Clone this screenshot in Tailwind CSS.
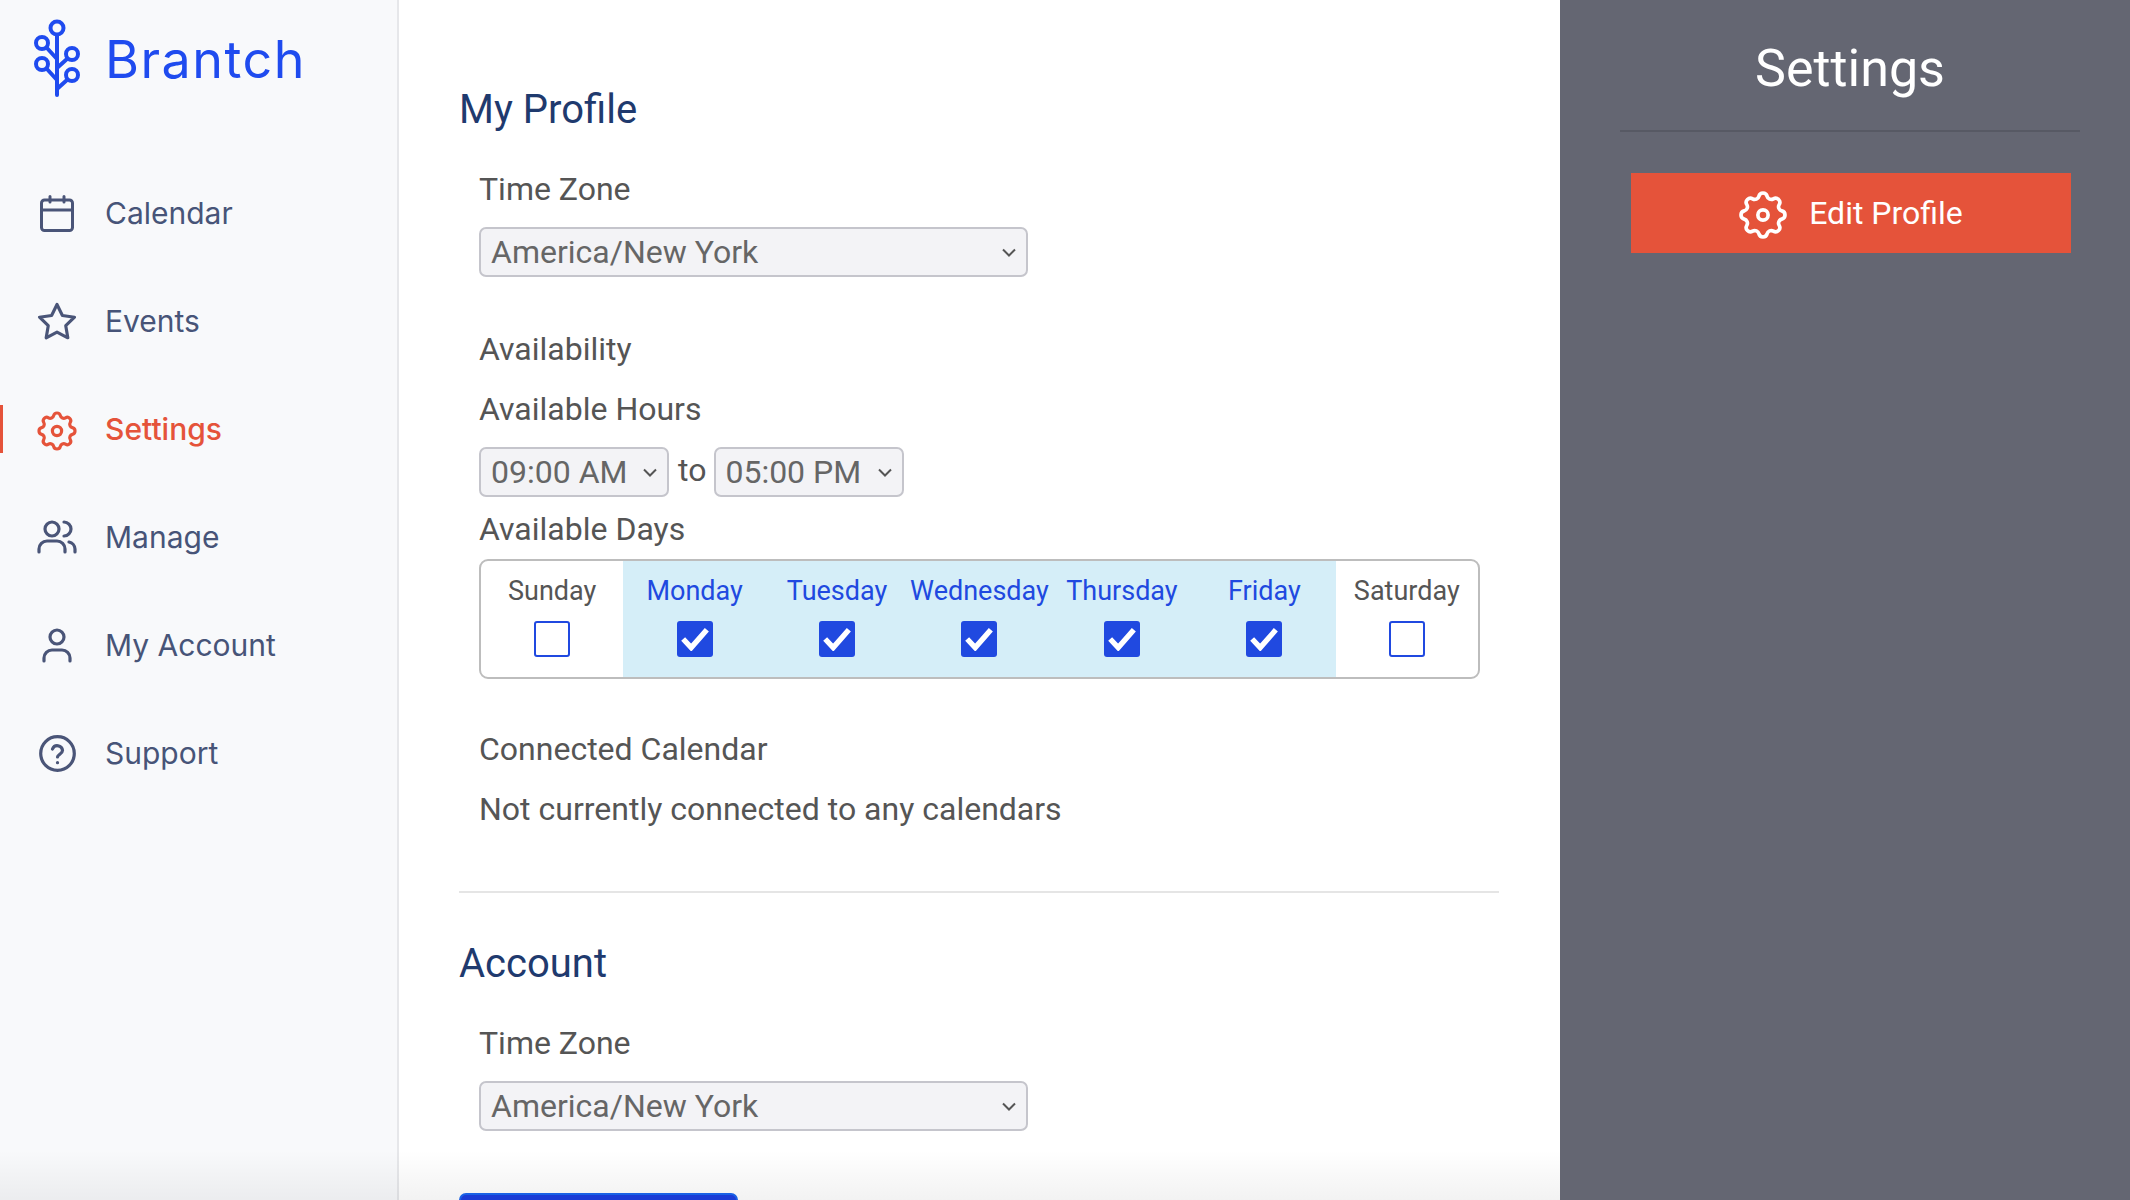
<!DOCTYPE html>
<html lang="en">
<head>
  <meta charset="UTF-8">
  <title>Brantch - Settings</title>
  <script src="https://cdn.jsdelivr.net/npm/@tailwindcss/browser@4"></script>
</head>
<body class="h-[1200px] overflow-hidden bg-white font-[Roboto,sans-serif]">
  <div class="relative flex h-[1200px] overflow-hidden">

    <!-- Sidebar -->
    <aside class="w-[399px] shrink-0 border-r-2 border-[#e6e7ea] bg-[#f8f9fb] font-[Inter,sans-serif]">
      <div class="flex h-[159px] items-start pl-[33px] pt-[19px]">
        <svg class="h-[78px] w-[48px] shrink-0" viewBox="33 19 48 78" fill="none" stroke="#1f4bef" stroke-width="4" stroke-linecap="round">
          <circle cx="57" cy="28" r="6.5"/>
          <circle cx="42" cy="43" r="6"/>
          <circle cx="72" cy="54" r="6"/>
          <circle cx="42" cy="64" r="6"/>
          <circle cx="72" cy="75" r="6"/>
          <path d="M57 35V95M46.500 47.500 57 59M46.500 68.500 57 80M67.500 58.500 57 68M67.500 79.500 57 89"/>
        </svg>
        <span class="ml-[24px] mt-[9px] text-[52px] leading-[64px] tracking-[1.500px] text-[#1f4bef]">Brantch</span>
      </div>
      <nav class="text-[30px] text-[#475478]">
        <a class="flex h-[108px] items-center">
          <span class="flex w-[114px] justify-center">
            <svg class="h-[37px] w-[34px]" viewBox="0 0 34 37" fill="none" stroke="#4a5578" stroke-width="3" stroke-linecap="round" stroke-linejoin="round"><rect x="1.500" y="5" width="31" height="30.500" rx="3"/><path d="M1.500 15H32.500M10 1.500V7M24 1.500V7"/></svg>
          </span>
          <span class="-ml-[9px]">Calendar</span>
        </a>
        <a class="flex h-[108px] items-center">
          <span class="flex w-[114px] justify-center pt-[2px]">
            <svg class="h-[42px] w-[42px]" viewBox="0 0 24 24" fill="none" stroke="#4a5578" stroke-width="1.800" stroke-linecap="round" stroke-linejoin="round"><path d="M12 2 15.090 8.260 22 9.270 17 14.140 18.180 21.020 12 17.770 5.820 21.020 7 14.140 2 9.270 8.910 8.260Z"/></svg>
          </span>
          <span class="-ml-[9px]">Events</span>
        </a>
        <a class="relative flex h-[108px] items-center font-medium text-[#e5533a]">
          <span class="absolute left-0 top-[30px] h-[48px] w-[3px] bg-[#e5533a]"></span>
          <span class="flex w-[114px] justify-center pt-[4px]">
            <svg class="h-[36px] w-[36px] overflow-visible" viewBox="3 3 18 18" fill="none" stroke="#e5533a" stroke-width="1.600" stroke-linecap="round" stroke-linejoin="round"><path d="M10.325 4.317c.426-1.756 2.924-1.756 3.35 0a1.724 1.724 0 002.573 1.066c1.543-.94 3.31.826 2.37 2.37a1.724 1.724 0 001.065 2.572c1.756.426 1.756 2.924 0 3.35a1.724 1.724 0 00-1.066 2.573c.94 1.543-.826 3.31-2.37 2.37a1.724 1.724 0 00-2.572 1.065c-.426 1.756-2.924 1.756-3.35 0a1.724 1.724 0 00-2.573-1.066c-1.543.94-3.31-.826-2.37-2.37a1.724 1.724 0 00-1.065-2.572c-1.756-.426-1.756-2.924 0-3.35a1.724 1.724 0 001.066-2.573c-.94-1.543.826-3.31 2.37-2.37.996.608 2.296.07 2.572-1.065z"/><circle cx="12" cy="12" r="2.300"/></svg>
          </span>
          <span class="-ml-[9px]">Settings</span>
        </a>
        <a class="flex h-[108px] items-center">
          <span class="flex w-[114px] justify-center">
            <svg class="h-[34px] w-[40px]" viewBox="0 0 40 34" fill="none" stroke="#4a5578" stroke-width="3.200" stroke-linecap="round" stroke-linejoin="round"><circle cx="15" cy="9" r="7"/><path d="M2 32v-3a8 8 0 0 1 8-8h10a8 8 0 0 1 8 8v3M27 2a7 7 0 0 1 0 14M32 22a7.500 7.500 0 0 1 6 7v3"/></svg>
          </span>
          <span class="-ml-[9px]">Manage</span>
        </a>
        <a class="flex h-[108px] items-center">
          <span class="flex w-[114px] justify-center">
            <svg class="h-[35px] w-[30px]" viewBox="0 0 30 35" fill="none" stroke="#4a5578" stroke-width="3.200" stroke-linecap="round" stroke-linejoin="round"><circle cx="15" cy="9" r="7"/><path d="M2 33v-3a8 8 0 0 1 8-8h10a8 8 0 0 1 8 8v3"/></svg>
          </span>
          <span class="-ml-[9px]">My Account</span>
        </a>
        <a class="flex h-[108px] items-center">
          <span class="flex w-[114px] justify-center">
            <svg class="h-[37px] w-[37px]" viewBox="0 0 37 37" fill="none" stroke="#4a5578" stroke-width="3.200" stroke-linecap="round" stroke-linejoin="round"><circle cx="18.500" cy="18.500" r="16.800"/><path d="M13.500 14a5.200 5.200 0 0 1 10 1.500c0 3.300-5 4.500-5 6.500M18.500 27.500v.2"/></svg>
          </span>
          <span class="-ml-[9px]">Support</span>
        </a>
      </nav>
    </aside>

    <!-- Main form -->
    <main class="w-[1161px] shrink-0 pl-[60px] pr-[61px] pt-[86px] text-[32px] leading-[40px] text-[#555555]">
      <h2 class="text-[40px] leading-[48px] text-[#1f3a6e]">My Profile</h2>
      <div class="pl-[20px]">
        <p class="mt-[35px]">Time Zone</p>
        <div class="relative mt-[18px] w-[549px]">
          <select class="block h-[50px] w-full appearance-none rounded-[7px] border-2 border-[#c5c5cc] bg-[#f3f3f6] pl-[10px] leading-[46px] text-[#666666]"><option>America/New York</option></select>
          <svg class="pointer-events-none absolute right-[12px] top-[21px] h-[9px] w-[14px]" viewBox="0 0 14 9" fill="none" stroke="#555555" stroke-width="2"><path d="M1 1.500 7 7.500 13 1.500"/></svg>
        </div>

        <p class="mt-[52px]">Availability</p>
        <p class="mt-[20px]">Available Hours</p>
        <div class="mt-[18px] flex items-start">
          <div class="relative w-[190px]">
            <select class="block h-[50px] w-full appearance-none rounded-[7px] border-2 border-[#c5c5cc] bg-[#f3f3f6] pl-[10px] leading-[46px] text-[#666666]"><option>09:00 AM</option></select>
            <svg class="pointer-events-none absolute right-[12px] top-[21px] h-[9px] w-[14px]" viewBox="0 0 14 9" fill="none" stroke="#555555" stroke-width="2"><path d="M1 1.500 7 7.500 13 1.500"/></svg>
          </div>
          <span class="ml-[9px] mr-[8px] leading-[46px]">to</span>
          <div class="relative w-[190px]">
            <select class="block h-[50px] w-full appearance-none rounded-[7px] border-2 border-[#c5c5cc] bg-[#f3f3f6] pl-[9px] leading-[46px] text-[#666666]"><option>05:00 PM</option></select>
            <svg class="pointer-events-none absolute right-[12px] top-[21px] h-[9px] w-[14px]" viewBox="0 0 14 9" fill="none" stroke="#555555" stroke-width="2"><path d="M1 1.500 7 7.500 13 1.500"/></svg>
          </div>
        </div>

        <p class="mt-[12px]">Available Days</p>
        <div class="mt-[10px] grid h-[120px] w-[1001px] grid-cols-7 overflow-hidden rounded-[9px] border-2 border-[#bdbdbd] text-center text-[27px] leading-[32px]">
          <div class="pt-[14px]">Sunday<span class="mx-auto mt-[14px] block h-[36px] w-[36px] rounded-[3px] border-2 border-[#2049e0] bg-white"></span></div>
          <div class="bg-[#d5eef8] pt-[14px] text-[#2049e0]">Monday<span class="mx-auto mt-[14px] flex h-[36px] w-[36px] items-center justify-center rounded-[3px] bg-[#2049e0]"><svg class="h-[24px] w-[28px]" viewBox="0 0 26 22" fill="none" stroke="#ffffff" stroke-width="5"><path d="M2 11 9.500 19 24 2.500"/></svg></span></div>
          <div class="bg-[#d5eef8] pt-[14px] text-[#2049e0]">Tuesday<span class="mx-auto mt-[14px] flex h-[36px] w-[36px] items-center justify-center rounded-[3px] bg-[#2049e0]"><svg class="h-[24px] w-[28px]" viewBox="0 0 26 22" fill="none" stroke="#ffffff" stroke-width="5"><path d="M2 11 9.500 19 24 2.500"/></svg></span></div>
          <div class="bg-[#d5eef8] pt-[14px] text-[#2049e0]">Wednesday<span class="mx-auto mt-[14px] flex h-[36px] w-[36px] items-center justify-center rounded-[3px] bg-[#2049e0]"><svg class="h-[24px] w-[28px]" viewBox="0 0 26 22" fill="none" stroke="#ffffff" stroke-width="5"><path d="M2 11 9.500 19 24 2.500"/></svg></span></div>
          <div class="bg-[#d5eef8] pt-[14px] text-[#2049e0]">Thursday<span class="mx-auto mt-[14px] flex h-[36px] w-[36px] items-center justify-center rounded-[3px] bg-[#2049e0]"><svg class="h-[24px] w-[28px]" viewBox="0 0 26 22" fill="none" stroke="#ffffff" stroke-width="5"><path d="M2 11 9.500 19 24 2.500"/></svg></span></div>
          <div class="bg-[#d5eef8] pt-[14px] text-[#2049e0]">Friday<span class="mx-auto mt-[14px] flex h-[36px] w-[36px] items-center justify-center rounded-[3px] bg-[#2049e0]"><svg class="h-[24px] w-[28px]" viewBox="0 0 26 22" fill="none" stroke="#ffffff" stroke-width="5"><path d="M2 11 9.500 19 24 2.500"/></svg></span></div>
          <div class="pt-[14px]">Saturday<span class="mx-auto mt-[14px] block h-[36px] w-[36px] rounded-[3px] border-2 border-[#2049e0] bg-white"></span></div>
        </div>

        <p class="mt-[50px]">Connected Calendar</p>
        <p class="mt-[20px]">Not currently connected to any calendars</p>
      </div>

      <hr class="mt-[62px] border-t-2 border-[#e5e5e5]">

      <h2 class="mt-[47px] text-[40px] leading-[48px] text-[#1f3a6e]">Account</h2>
      <div class="pl-[20px]">
        <p class="mt-[35px]">Time Zone</p>
        <div class="relative mt-[18px] w-[549px]">
          <select class="block h-[50px] w-full appearance-none rounded-[7px] border-2 border-[#c5c5cc] bg-[#f3f3f6] pl-[10px] leading-[46px] text-[#666666]"><option>America/New York</option></select>
          <svg class="pointer-events-none absolute right-[12px] top-[21px] h-[9px] w-[14px]" viewBox="0 0 14 9" fill="none" stroke="#555555" stroke-width="2"><path d="M1 1.500 7 7.500 13 1.500"/></svg>
        </div>
      </div>
      <button class="mt-[62px] block h-[60px] w-[279px] rounded-[7px] border-2 border-[#1b66f0] bg-[#1c3fe0]"></button>
    </main>

    <!-- Right panel -->
    <aside class="flex-1 bg-[#646672] pl-[60px] pr-[50px] pt-[39px] text-white">
      <h1 class="text-center text-[52px] leading-[60px]">Settings</h1>
      <div class="mt-[31px] h-[2px] bg-[#575964]"></div>
      <button class="ml-[11px] mt-[41px] flex h-[80px] w-[440px] items-center justify-center gap-[24px] bg-[#e5533a] pl-[2px] text-[32px]">
        <span class="pt-[4px]">
          <svg class="h-[44px] w-[44px] overflow-visible" viewBox="3 3 18 18" fill="none" stroke="#ffffff" stroke-width="1.500" stroke-linecap="round" stroke-linejoin="round"><path d="M10.325 4.317c.426-1.756 2.924-1.756 3.35 0a1.724 1.724 0 002.573 1.066c1.543-.94 3.31.826 2.37 2.37a1.724 1.724 0 001.065 2.572c1.756.426 1.756 2.924 0 3.35a1.724 1.724 0 00-1.066 2.573c.94 1.543-.826 3.31-2.37 2.37a1.724 1.724 0 00-2.572 1.065c-.426 1.756-2.924 1.756-3.35 0a1.724 1.724 0 00-2.573-1.066c-1.543.94-3.31-.826-2.37-2.37a1.724 1.724 0 00-1.065-2.572c-1.756-.426-1.756-2.924 0-3.35a1.724 1.724 0 001.066-2.573c-.94-1.543.826-3.31 2.37-2.37.996.608 2.296.07 2.572-1.065z"/><circle cx="12" cy="12" r="2.100"/></svg>
        </span>
        Edit Profile
      </button>
    </aside>

    <!-- Fade over the bottom of the sidebar and form -->
    <div class="pointer-events-none absolute bottom-0 left-0 h-[50px] w-[1560px] bg-gradient-to-b from-transparent to-black/5"></div>
  </div>
</body>
</html>
